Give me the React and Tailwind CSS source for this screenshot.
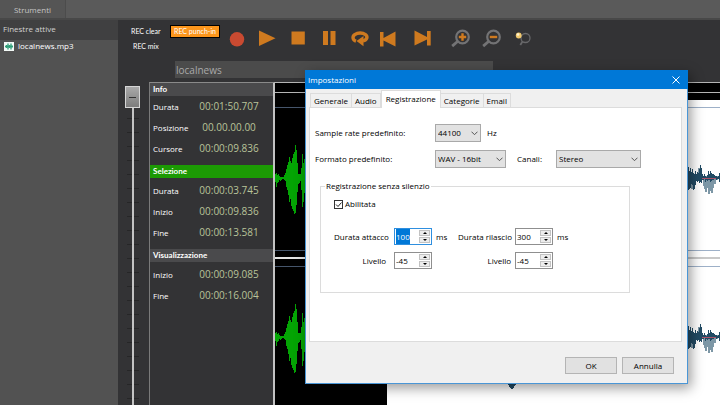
import { useEffect, useRef } from "react";

const dialogTabs = ["Generale", "Audio", "Registrazione", "Categorie", "Email"];

const sections = [
  {
    title: "Info",
    header: "bg-[#4a4a4c]",
    body: "pb-1.5",
    rows: [["Durata", "00:01:50.707"], ["Posizione", "00.00.00.00"], ["Cursore", "00:00:09.836"]],
  },
  {
    title: "Selezione",
    header: "bg-[#1c9a04]",
    body: "pt-0.5 pb-1.5",
    rows: [["Durata", "00:00:03.745"], ["Inizio", "00:00:09.836"], ["Fine", "00:00:13.581"]],
  },
  {
    title: "Visualizzazione",
    header: "bg-[#4a4a4c]",
    body: "pt-0.5 pb-1.5",
    rows: [["Inizio", "00:00:09.085"], ["Fine", "00:00:16.004"]],
  },
];

// Envelope samples of one burst of speech: [top, bottom] for each pixel column.
const burst = [
  [66, 74], [65, 79], [67, 75], [66, 74], [68, 72], [69, 73], [69, 72], [69, 71], [69, 71], [67, 72],
  [65, 73], [61, 79], [57, 82], [54, 87], [49, 94], [53, 91], [55, 98], [50, 101], [46, 103], [44, 106],
  [37, 105], [42, 97], [55, 84], [66, 76], [66, 75], [66, 73], [60, 82], [46, 99], [55, 94], [51, 85],
  [58, 84], [62, 80],
];

// Tail of the unselected signal, from the dialog's right edge to the end of the view.
const tail = [
  [59, 82], [63, 81], [60, 80], [64, 76], [61, 77], [65, 82], [66, 81], [63, 77], [66, 73], [64, 74],
  [65, 73], [61, 75], [57, 74], [60, 75], [66, 72], [68, 72], [66, 71], [68, 74], [69, 72], [67, 73],
  [63, 72], [66, 72], [63, 74], [65, 73], [66, 72], [66, 72], [67, 71], [68, 71], [68, 72], [69, 71],
  [68, 71], [65, 74], [63, 75],
];

function columns(samples, start) {
  return samples.map(([top, bottom], i) => "M" + (start + i) + " " + top + "h1V" + bottom + "h-1z").join("");
}

function ToolButton({ label, children }) {
  return (
    <button type="button" aria-label={label} className="h-5 w-[31px] shrink-0">
      <svg viewBox="0 0 31 20" className="h-5 w-[31px]" fill="#cf7a1f">
        {children}
      </svg>
    </button>
  );
}

function Toolbar() {
  return (
    <div className="flex h-[38px] shrink-0 pt-1 pl-[7px] font-['Lato','Open_Sans',sans-serif]">
      <div className="flex w-[46px] flex-col items-start gap-px pl-[6px] text-[7px] leading-[14px] whitespace-nowrap text-white">
        <button type="button">REC clear</button>
        <button type="button" className="pl-0.5">REC mix</button>
      </div>
      <div className="flex w-[50px] items-start">
        <button
          type="button"
          className="mt-[2px] h-[11px] w-[48px] bg-[#fd961c] text-[7px] leading-[11px] whitespace-nowrap text-white outline outline-black"
        >
          REC punch-in
        </button>
      </div>
      <div className="mt-1 flex">
        <ToolButton label="Registra">
          <circle cx="16" cy="11.3" r="7.2" fill="#c94a31" />
        </ToolButton>
        <ToolButton label="Riproduci">
          <path d="M7 2.5 23.5 10.3 7 18z" />
        </ToolButton>
        <ToolButton label="Ferma">
          <path d="M8.5 3.5h13.3v13H8.500z" />
        </ToolButton>
        <ToolButton label="Pausa">
          <path d="M9 3h5v14H9zM16.500 3h5v14h-5z" />
        </ToolButton>
        <ToolButton label="Ripeti">
          <path
            d="M11 13.200C7.400 12 7.200 8.400 9.700 6.600 12.800 4.500 17.600 4.500 20.500 6.600 23 8.600 22.200 12 18 12.800"
            fill="none"
            stroke="#cf7a1f"
            strokeWidth="3.400"
          />
          <path d="M18.500 8v10.200L11.500 13z" />
        </ToolButton>
        <ToolButton label="Inizio">
          <path d="M4 4h3.500v6L19.500 3.500v15L7.500 12.500v6H4z" />
        </ToolButton>
        <ToolButton label="Fine">
          <path d="M7.500 2.500 20 9V3h3.700v14.500H20V11.500L7.500 17.500z" />
        </ToolButton>
      </div>
      <div className="mt-1 ml-[7px] flex">
        <ToolButton label="Ingrandisci">
          <circle cx="17.500" cy="9" r="6.300" fill="none" stroke="#737375" strokeWidth="2.200" />
          <path d="m12.500 13.500-5.300 4.600" stroke="#737375" strokeWidth="2.800" />
          <path d="M16.300 5.300h2.400v2.500h2.500v2.400h-2.500v2.500h-2.400v-2.500h-2.500V7.800h2.500z" />
        </ToolButton>
        <ToolButton label="Riduci">
          <circle cx="17.500" cy="9" r="6.300" fill="none" stroke="#737375" strokeWidth="2.200" />
          <path d="m12.500 13.500-5.300 4.600" stroke="#737375" strokeWidth="2.800" />
          <path d="M13.800 7.800h7.400v2.400h-7.400z" />
        </ToolButton>
        <ToolButton label="Zoom selezione">
          <circle cx="18.500" cy="10" r="4.500" fill="none" stroke="#68686a" strokeWidth="1.300" />
          <path d="m15.500 13.500-2.200 3.500" stroke="#68686a" strokeWidth="1.800" />
          <circle cx="11.700" cy="7.500" r="2.900" fill="#f1c96e" />
          <circle cx="11" cy="6.500" r="1.300" fill="#fff3cf" />
        </ToolButton>
      </div>
    </div>
  );
}

function Sidebar() {
  return (
    <aside className="w-[118px] shrink-0 bg-[#525252]">
      <h2 className="h-5 bg-[#404041] pl-[3px] text-[8px] leading-[18px] text-[#d2d2d2]">Finestre attive</h2>
      <ul>
        <li className="flex h-3 items-center gap-1 pl-1">
          <svg viewBox="0 0 10 9" className="h-[9px] w-[10px]">
            <path d="M0 0h10v9H0z" fill="#f4faf7" />
            <path d="M1 4.500h8M2.500 3v3M4 1.500v6M5.500 3v3M7 1.500v6M8.300 3.500v2" stroke="#2f9f78" strokeWidth="1.300" />
          </svg>
          <a href="#localnews" className="text-[8px] leading-3 text-white">localnews.mp3</a>
        </li>
      </ul>
    </aside>
  );
}

function Fader() {
  return (
    <div className="flex w-[31px] shrink-0 bg-[repeating-linear-gradient(to_bottom,transparent_0_8px,#262627_8px_9px,transparent_9px_14px)] bg-[length:12px_100%] bg-[position:9px_0] bg-no-repeat pt-1 pl-[7px]">
      <input
        type="range"
        aria-label="Volume"
        defaultValue="0"
        className="h-full w-[15px] appearance-none bg-[linear-gradient(to_right,transparent_7px,#c4c4c4_7px_9px,transparent_9px)] [writing-mode:vertical-lr] [&::-webkit-slider-thumb]:h-[22px] [&::-webkit-slider-thumb]:w-[15px] [&::-webkit-slider-thumb]:appearance-none [&::-webkit-slider-thumb]:border [&::-webkit-slider-thumb]:border-[#d6d6d6] [&::-webkit-slider-thumb]:bg-[linear-gradient(#333,#333),linear-gradient(#a9a9a9,#7c7c7c)] [&::-webkit-slider-thumb]:bg-[length:7px_1px,100%_100%] [&::-webkit-slider-thumb]:bg-center [&::-webkit-slider-thumb]:bg-no-repeat"
      />
    </div>
  );
}

function InfoPanel() {
  return (
    <div className="w-[126px] shrink-0 border-t border-r-2 border-l border-t-[#8a8a8a] border-r-[#c2c2c2] border-l-[#7a7a7a]">
      {sections.map((s) => (
        <section key={s.title}>
          <h3 className={"h-[13px] pl-[3px] font-['Lato','Open_Sans',sans-serif] text-[8px] leading-[13px] font-bold text-white " + s.header}>
            {s.title}
          </h3>
          <dl className={s.body}>
            {s.rows.map(([label, value]) => (
              <div key={label} className="flex h-[21px] items-center pl-[3px]">
                <dt className="w-[46px] text-[8px] text-white">{label}</dt>
                <dd className="w-[60px] text-center text-[10px] text-[#b9c49a]">{value}</dd>
              </div>
            ))}
          </dl>
        </section>
      ))}
    </div>
  );
}

function DarkWave() {
  return (
    <svg viewBox="0 0 112 142" className="h-[142px] w-[112px]" shapeRendering="crispEdges" fill="#04a404">
      <path d={columns(burst, 0)} />
      <path d={columns(burst, 32)} />
      <path d={columns(burst, 64)} />
    </svg>
  );
}

function LightWave() {
  return (
    <svg viewBox="0 0 334 142" className="h-[142px] w-[334px]" shapeRendering="crispEdges">
      <path fill="#7d97a6" d="M301 70h5v11h-2v-3h-3zM311 60h2v10h-2zM315 70h1v8h1v3h1v3h2v-4h1v6h2v-3h1v2h2v-5h1v-4h2v-4h2v-4h-15z" />
      <path
        fill="#224b64"
        d="M0 68h12l4-12 5 10 8-20 6 20h16l6-16 6 18h20l8-24 9 22h24l5-15 6 16h22l6-12 6 12h20l8-18 7 18h22l8-20 9 20h20l8-15 7 15h13v8H135l-6 42-3 5h-2l-3-5-6-42H76l-8 18-9-18H36l-6 16-9-16H0z"
      />
      <path fill="#224b64" d={columns(tail, 301)} />
      <path fill="#a8536a" d="M315 70h14v1h-14z" />
    </svg>
  );
}

function WavePane({ dark }) {
  const line = dark ? "border-[#46566c]" : "border-[#9db0c8]";
  const Wave = dark ? DarkWave : LightWave;
  return (
    <div className={dark ? "w-[112px] shrink-0 bg-black" : "min-w-0 flex-1 bg-white"}>
      <div className="h-[10px] border-t border-[#b5b5b5] bg-black" />
      <div className="h-2 border-t border-[#b5b5b5] bg-black" />
      <div className={"mt-[7px] h-36 overflow-hidden border-y " + line}>
        <Wave />
      </div>
      <div className={dark ? "mt-1.5 h-[2px] bg-[#e4e4e4]" : "mt-1.5 h-[2px] bg-[#c9c9c9]"} />
      <div className={"mt-[7px] h-36 overflow-hidden border-y " + line}>
        <Wave />
      </div>
    </div>
  );
}

function Select({ label, value, width }) {
  return (
    <span className={"relative flex h-[18px] " + width}>
      <select
        aria-label={label}
        defaultValue={value}
        className="w-full appearance-none border border-[#a9a9a9] bg-[#e2e2e2] pl-0.5 text-[8px] leading-4 text-black"
      >
        <option>{value}</option>
      </select>
      <svg viewBox="0 0 7 5" className="pointer-events-none absolute top-[7px] right-[3px] h-[5px] w-[7px]" fill="none" stroke="#555">
        <path d="m.5.700 3 3 3-3" />
      </svg>
    </span>
  );
}

function Spinner({ label, value, active }) {
  const ref = useRef(null);
  useEffect(() => {
    if (active) {
      ref.current.focus();
      ref.current.select();
    }
  }, [active]);
  return (
    <span className={"flex h-[17px] w-[38px] border bg-white " + (active ? "border-[#2f8fdf]" : "border-[#8f8f8f]")}>
      <input
        ref={ref}
        type="text"
        inputMode="numeric"
        aria-label={label}
        defaultValue={value}
        className="min-w-0 flex-1 pl-px text-[8px] leading-[15px] outline-none selection:bg-[#0078d7] selection:text-white"
      />
      <span className="flex w-3 flex-col gap-px py-px pr-px">
        <button type="button" aria-label={label + " su"} className="flex flex-1 items-center justify-center border border-[#c2c2c2] bg-[#ececec]">
          <svg viewBox="0 0 4 2" className="h-[2px] w-1"><path d="M0 2h4L2 0z" /></svg>
        </button>
        <button type="button" aria-label={label + " giù"} className="flex flex-1 items-center justify-center border border-[#c2c2c2] bg-[#ececec]">
          <svg viewBox="0 0 4 2" className="h-[2px] w-1"><path d="M0 0h4L2 2z" /></svg>
        </button>
      </span>
    </span>
  );
}

function SettingsDialog() {
  return (
    <div
      role="dialog"
      aria-label="Impostazioni"
      className="absolute top-[70px] left-[305px] w-[383px] border border-[#4a96d6] bg-[#f0f0f0] text-[8px] leading-3 whitespace-nowrap text-black shadow-[3px_4px_12px_rgba(0,0,0,0.4)]"
    >
      <div className="-mx-px -mt-px flex h-[19px] items-center justify-between bg-[#0078d7] pr-2 pl-[3px] text-white">
        <h1>Impostazioni</h1>
        <button type="button" aria-label="Chiudi">
          <svg viewBox="0 0 8 8" className="h-2 w-2" stroke="white"><path d="m.5.500 7 7m0-7-7 7" /></svg>
        </button>
      </div>
      <div role="tablist" className="flex h-[18px] items-end pl-1">
        {dialogTabs.map((t) => (
          <button
            key={t}
            type="button"
            role="tab"
            aria-selected={t === "Registrazione"}
            className={
              t === "Registrazione"
                ? "z-10 -mb-px h-[18px] border border-b-0 border-[#dcdcdc] bg-white px-1 pb-px"
                : "h-[14px] border-t border-r border-[#dcdcdc] px-[3px] first:border-l"
            }
          >
            {t}
          </button>
        ))}
      </div>
      <div className="mr-[5px] ml-[3px] h-[235px] border border-[#dcdcdc] bg-white pt-4 pl-[5px]">
        <div className="flex h-[18px] items-center">
          <span className="w-[120px]">Sample rate predefinito:</span>
          <Select label="Sample rate predefinito" value="44100" width="w-[46px]" />
          <span className="pl-1.5">Hz</span>
        </div>
        <div className="mt-2 flex h-[18px] items-center">
          <span className="w-[120px]">Formato predefinito:</span>
          <Select label="Formato predefinito" value="WAV - 16bit" width="w-[71px]" />
          <span className="w-[50px] pl-[11px]">Canali:</span>
          <Select label="Canali" value="Stereo" width="w-[85px]" />
        </div>
        <fieldset className="mt-3 ml-[5px] h-[113px] w-[310px] border border-[#dcdcdc]">
          <legend className="ml-1 px-px">Registrazione senza silenzio</legend>
          <label className="mt-1.5 ml-[13px] flex h-3 w-max items-center gap-[2px]">
            <span className="relative flex">
              <input
                type="checkbox"
                defaultChecked
                className="peer h-[9px] w-[9px] appearance-none border border-[#333] bg-white"
              />
              <svg
                viewBox="0 0 9 9"
                className="pointer-events-none absolute inset-0 hidden h-[9px] w-[9px] peer-checked:block"
                fill="none"
                stroke="#222"
              >
                <path d="m2 4.500 2 2 3.500-4" />
              </svg>
            </span>
            Abilitata
          </label>
          <div className="mt-[18px] grid w-max grid-cols-[60px_38px_26px_57px_38px_auto] items-center gap-y-[7px] pl-[13px]">
            <span>Durata attacco</span>
            <Spinner label="Durata attacco" value="100" active />
            <span className="pl-1">ms</span>
            <span>Durata rilascio</span>
            <Spinner label="Durata rilascio" value="300" />
            <span className="pl-1">ms</span>
            <span className="pr-2 text-right">Livello</span>
            <Spinner label="Livello attacco" value="-45" />
            <span />
            <span className="pr-1 text-right">Livello</span>
            <Spinner label="Livello rilascio" value="-45" />
          </div>
        </fieldset>
      </div>
      <div className="flex justify-end gap-[5px] pt-[15px] pr-[13px] pb-[9px]">
        <button type="button" className="h-[17px] w-[52px] border border-[#b4b4b4] bg-[#e1e1e1]">OK</button>
        <button type="button" className="h-[17px] w-[52px] border border-[#b4b4b4] bg-[#e1e1e1]">Annulla</button>
      </div>
    </div>
  );
}

export default function App() {
  return (
    <div className="relative flex h-screen flex-col overflow-hidden bg-[#333335] font-['Open_Sans','Noto_Sans',sans-serif]">
      <nav className="flex h-5 shrink-0 border-b-2 border-[#484848] bg-[#5a5a5a]">
        <button type="button" className="w-[66px] border-r border-[#4c4c4c] bg-[#555] pt-0.5 text-[8px] text-[#c4c4c4]">Strumenti</button>
      </nav>
      <div className="flex min-h-0 flex-1">
        <Sidebar />
        <main className="flex min-w-0 flex-1 flex-col">
          <Toolbar />
          <input
            type="text"
            aria-label="Nome traccia"
            defaultValue="localnews"
            className="mt-[3px] mb-1 ml-[57px] h-[17px] w-[318px] shrink-0 bg-[#4b4b4b] pl-px text-[10px] text-[#a9a9a9]"
          />
          <div className="flex min-h-0 flex-1 overflow-hidden">
            <Fader />
            <InfoPanel />
            <WavePane dark />
            <WavePane />
          </div>
        </main>
      </div>
      <SettingsDialog />
    </div>
  );
}
